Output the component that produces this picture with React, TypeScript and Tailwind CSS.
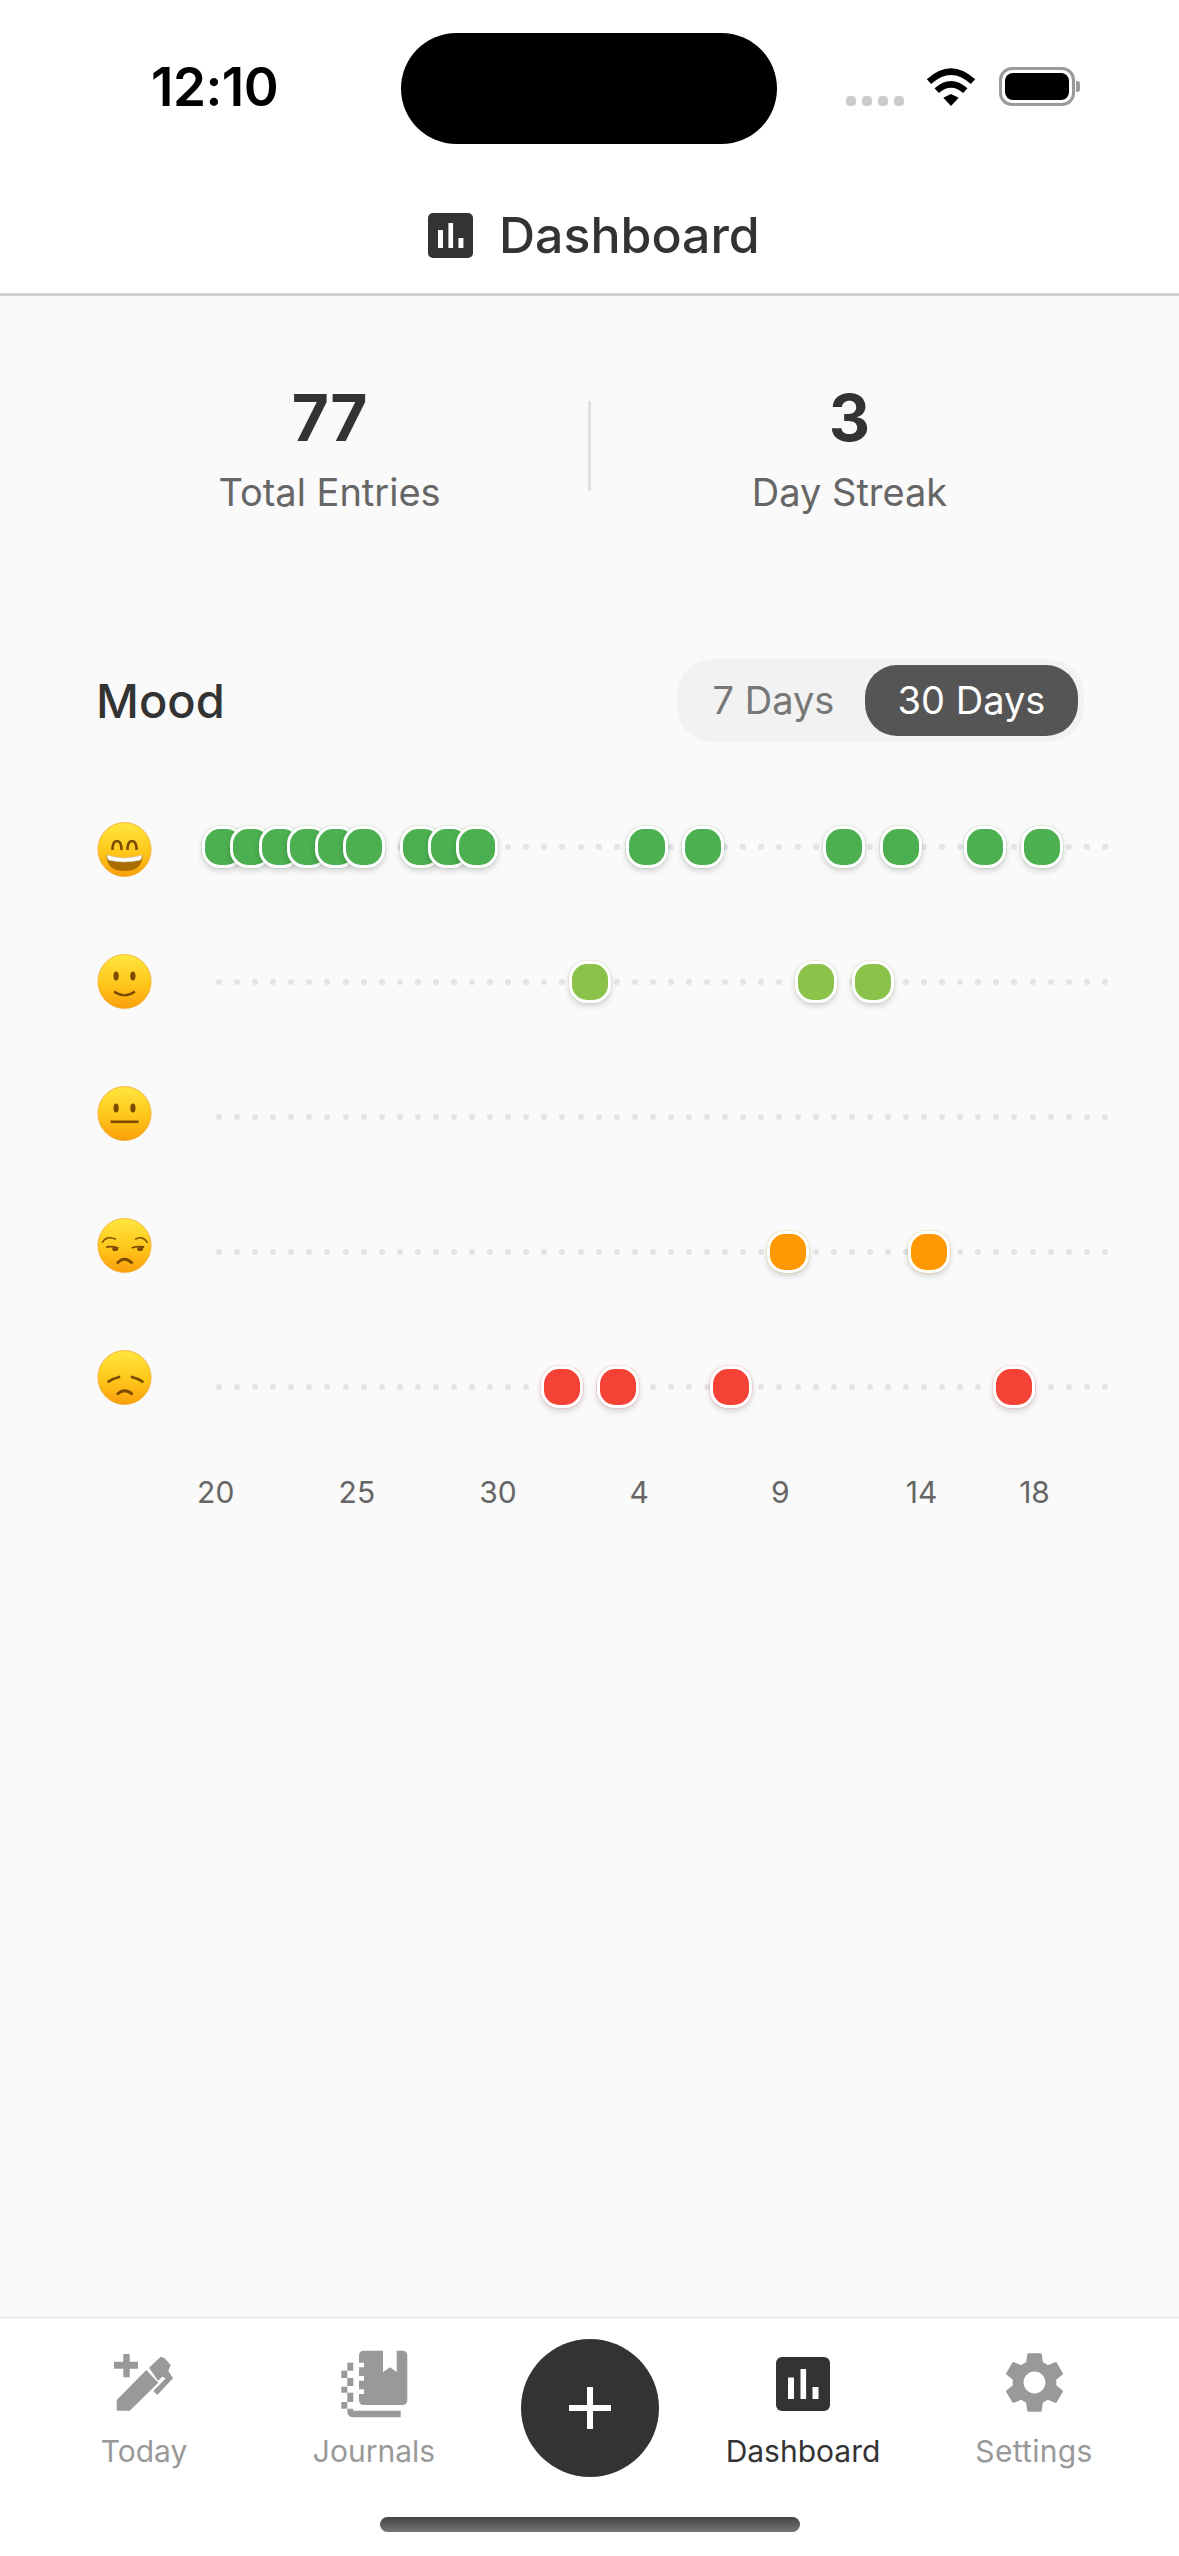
import { MdSettings } from 'react-icons/md';

const DAY_COUNT = 30;

const AXIS_LABELS: Record<number, string> = {
  0: '20',
  5: '25',
  10: '30',
  15: '4',
  20: '9',
  25: '14',
  29: '18',
};

const ROWS = [
  {
    key: 'great',
    days: [0, 1, 2, 3, 4, 5, 7, 8, 9, 15, 17, 22, 24, 27, 29],
    dot: 'bg-[#4caf50] shadow-[0_0_0_1px_#4caf5022,0_3px_6px_rgba(0,0,0,0.16)]',
  },
  {
    key: 'good',
    days: [13, 21, 23],
    dot: 'bg-[#8bc34a] shadow-[0_0_0_1px_#8bc34a22,0_3px_6px_rgba(0,0,0,0.16)]',
  },
  { key: 'neutral', days: [], dot: '' },
  {
    key: 'meh',
    days: [20, 25],
    dot: 'bg-[#ff9800] shadow-[0_0_0_1px_#ff980022,0_3px_6px_rgba(0,0,0,0.16)]',
  },
  {
    key: 'bad',
    days: [12, 14, 18, 28],
    dot: 'bg-[#f44336] shadow-[0_0_0_1px_#f4433622,0_3px_6px_rgba(0,0,0,0.16)]',
  },
];

function ChartIcon({ className }: { className: string }) {
  return (
    <svg viewBox="0 0 54 54" className={className}>
      <rect width="54" height="54" rx="6" fill="#333333" />
      <rect x="12" y="20.5" width="6" height="21.5" fill="#ffffff" />
      <rect x="24.5" y="12" width="5.6" height="30" fill="#ffffff" />
      <rect x="36.5" y="30" width="6" height="12" fill="#ffffff" />
    </svg>
  );
}

function Emoji({ mood }: { mood: string }) {
  const brown = '#7a4a00';
  return (
    <svg viewBox="0 0 54 55" className="w-[55px] h-[55px] shrink-0">
      <defs>
        <linearGradient id={`face-${mood}`} x1="0" y1="0" x2="0" y2="1">
          <stop offset="0" stopColor="#ffe640" />
          <stop offset="0.55" stopColor="#ffc61a" />
          <stop offset="1" stopColor="#fa9f0c" />
        </linearGradient>
      </defs>
      <ellipse cx="27" cy="27.5" rx="26.6" ry="27" fill={`url(#face-${mood})`} stroke="#f0a020" strokeWidth="0.7" />
      {mood === 'great' && (
        <g fill="none" stroke={brown} strokeWidth="2.6">
          <path d="M15 28 Q15 19 19.5 19 Q24 19 24 28" />
          <path d="M30 28 Q30 19 34.5 19 Q39 19 39 28" />
          <path d="M9 33 Q27 39 45 33 Q45 49 27 49 Q9 49 9 33 Z" fill="#a86c00" stroke="none" />
          <path d="M9.5 33 Q27 39 44.5 33 Q44.5 36 43 38 Q27 42 11 38 Q9.5 36 9.5 33 Z" fill="#ffffff" stroke="#c9c9c9" strokeWidth="0.5" />
        </g>
      )}
      {mood === 'good' && (
        <g>
          <ellipse cx="18.6" cy="22" rx="2.6" ry="4.6" fill={brown} />
          <ellipse cx="35.4" cy="22" rx="2.6" ry="4.6" fill={brown} />
          <path d="M16.5 37.5 Q27 45 37.5 37.5" fill="none" stroke={brown} strokeWidth="2.2" />
        </g>
      )}
      {mood === 'neutral' && (
        <g>
          <ellipse cx="18.6" cy="22" rx="2.6" ry="4.6" fill={brown} />
          <ellipse cx="35.4" cy="22" rx="2.6" ry="4.6" fill={brown} />
          <rect x="13" y="34.5" width="28" height="2.6" fill={brown} />
        </g>
      )}
      {mood === 'meh' && (
        <g fill="none" stroke={brown} strokeWidth="1.6">
          <path d="M4.7 24.7 Q9 17 18.3 21.3" />
          <path d="M37.7 21.3 Q45 17 50 24.7" />
          <path d="M8.7 29 Q14 28 21 30" strokeWidth="1.8" />
          <path d="M34 30 Q40 28 46.7 29" strokeWidth="1.8" />
          <ellipse cx="17.7" cy="31" rx="3" ry="2" fill={brown} stroke="none" />
          <ellipse cx="42.7" cy="31" rx="3" ry="2" fill={brown} stroke="none" />
          <path d="M19.5 45.5 Q27 37 35 45.5" strokeWidth="2.8" />
        </g>
      )}
      {mood === 'bad' && (
        <g fill="none" stroke={brown} strokeWidth="2.6">
          <path d="M10 32.3 Q16 28 22.7 26.7" />
          <path d="M33.3 26.7 Q40 28 46 32.3" />
          <path d="M19.5 44.5 Q27 37 35 44.5" strokeWidth="2.8" />
        </g>
      )}
    </svg>
  );
}

function TodayIcon() {
  return (
    <svg viewBox="0 0 70 65" className="w-[70px] h-[65px]" fill="#999999">
      <path d="M5 11.7H14.3V4H20.7V11.7H29V18.7H20.7V27.3H14.3V18.7H5Z" />
      <path d="M7.7 50L37.3 20L49.3 32.7L20.7 60.7H7.7Z" />
      <path d="M40 17.7L51.7 6.7L55.7 8.3L61.7 15L59.3 20.7L64 28.3L48.3 45L44.3 41L56.7 28.3L53.3 26.7L49 30.7Z" />
    </svg>
  );
}

function JournalsIcon() {
  return (
    <svg viewBox="0 0 70 68" className="w-[70px] h-[68px]" fill="#999999">
      <path d="M25 0.7H44V22L51 17.3L57.7 22V0.7H63.3Q68.3 0.7 68.3 5.7V50Q68.3 55 63.3 55H25Q20 55 20 50V44H25V39.3H20V30.7H25V26H20V17.3H25V12.7H20V5.7Q20 0.7 25 0.7Z" />
      <rect x="8.3" y="12.7" width="6" height="8" />
      <rect x="2.3" y="20.7" width="6" height="7.3" />
      <rect x="8.3" y="28" width="6" height="8" />
      <rect x="2.3" y="36.7" width="6" height="6" />
      <rect x="8.3" y="42.7" width="6" height="9.3" />
      <rect x="2.3" y="52" width="6" height="6.7" />
      <path d="M8.3 58.7H14.3V60.7H61.7V67.3H15Q8.3 67.3 8.3 60.7Z" />
    </svg>
  );
}

function Wifi() {
  return (
    <svg viewBox="0 0 50 38" className="w-[50px] h-[38px]">
      <path d="M3 13.7 Q25 -6.3 47 13.7" fill="none" stroke="#000000" strokeWidth="6.5" />
      <path d="M10.7 22.7 Q25 9.9 39.3 22.7" fill="none" stroke="#000000" strokeWidth="6.5" />
      <path d="M17.3 29.7L25 26L32.7 29.7L25 38Z" fill="#000000" />
    </svg>
  );
}

export default function App() {
  return (
    <div className="w-[1179px] h-[2556px] flex flex-col bg-[#fafafa] font-['Inter',sans-serif] antialiased overflow-hidden">
      {/* Header */}
      <div className="bg-white border-b-[3px] border-[#d0d0d0] pt-[33px]">
        <div className="flex items-start">
          <div className="w-[401px] pl-[151px] h-[73px] flex items-end">
            <span className="text-[53px] leading-[50px] font-semibold text-black tracking-[-0.5px] -mb-[6px]">12:10</span>
          </div>
          <div className="w-[376px] h-[111px] rounded-full bg-black" />
          <div className="pl-[69px] h-[73px] flex items-end">
            <div className="flex gap-[6px] mr-[22px]">
              <span className="w-[10px] h-[10px] rounded-[4px] bg-[#cccccc]" />
              <span className="w-[10px] h-[10px] rounded-[4px] bg-[#cccccc]" />
              <span className="w-[10px] h-[10px] rounded-[4px] bg-[#cccccc]" />
              <span className="w-[10px] h-[10px] rounded-[4px] bg-[#cccccc]" />
            </div>
            <div className="mr-[23px]">
              <Wifi />
            </div>
            <div className="flex items-center">
              <div className="w-[76px] h-[39px] rounded-[13px] border-[3px] border-[#9a9a9a] flex items-center justify-center">
                <div className="w-[64px] h-[27px] rounded-[8px] bg-black" />
              </div>
              <div className="w-[4px] h-[11px] rounded-r-[3px] bg-[#9a9a9a] ml-[1px]" />
            </div>
          </div>
        </div>
        <div className="flex items-center pl-[428px] mt-[69px] mb-[35px] h-[45px] gap-[26px]">
          <ChartIcon className="w-[45px] h-[45px]" />
          <span className="text-[50px] leading-[45px] font-medium text-[#333333]">Dashboard</span>
        </div>
      </div>

      {/* Stats */}
      <div className="flex-1">
        <div className="flex items-center pl-[71px] pr-[71px] pt-[90px]">
          <div className="flex-1 flex flex-col items-center">
            <span className="text-[64px] leading-[64px] font-bold text-[#333333]">77</span>
            <span className="text-[38px] leading-[46px] mt-[19px] text-[#666666]">Total Entries</span>
          </div>
          <div className="w-[3px] h-[90px] mb-[9px] bg-[#e0e0e0]" />
          <div className="flex-1 flex flex-col items-center">
            <span className="text-[64px] leading-[64px] font-bold text-[#333333]">3</span>
            <span className="text-[38px] leading-[46px] mt-[19px] text-[#666666]">Day Streak</span>
          </div>
        </div>

        {/* Mood */}
        <div className="flex items-center justify-between pl-[96px] pr-[95px] mt-[144px]">
          <span className="text-[47px] leading-[56px] font-medium text-[#333333]">Mood</span>
          <div className="w-[407px] h-[83px] rounded-[36px] bg-[#f2f2f2] flex items-center justify-end pr-[6px]">
            <span className="flex-1 pl-[5px] text-center text-[38px] text-[#777777]">7 Days</span>
            <span className="w-[213px] h-[71px] rounded-[32px] bg-[#555555] flex items-center justify-center text-[38px] text-white">30 Days</span>
          </div>
        </div>

        <div className="flex items-start pl-[97px] mt-[80px]">
          <div className="flex flex-col gap-[77px]">
            {ROWS.map((row) => (
              <Emoji key={row.key} mood={row.key} />
            ))}
          </div>
          <div className="flex flex-col gap-[93px] ml-[57px] mt-[4px]">
            {ROWS.map((row) => (
              <div key={row.key} className="relative h-[42px] grid grid-cols-[repeat(30,28.24px)]">
                <div className="absolute left-[7px] top-[18px] w-[892px] flex justify-between">
                  {Array.from({ length: 50 }).map((_, i) => (
                    <span key={i} className="w-[6px] h-[6px] rounded-full bg-[#e4e4e4]" />
                  ))}
                </div>
                {Array.from({ length: DAY_COUNT }).map((_, day) => (
                  <div key={day} className="flex justify-center">
                    {row.days.includes(day) && (
                      <span className={`relative shrink-0 w-[42px] h-[42px] rounded-[18px] border-[3px] border-white ${row.dot}`} />
                    )}
                  </div>
                ))}
              </div>
            ))}
          </div>
        </div>

        {/* Axis */}
        <div className="grid grid-cols-[repeat(30,28.24px)] ml-[201.6px] mt-[66px]">
          {Array.from({ length: DAY_COUNT }).map((_, day) => (
            <div key={day} className="flex justify-center">
              <span className="text-[30px] leading-[36px] text-[#666666] whitespace-nowrap">{AXIS_LABELS[day]}</span>
            </div>
          ))}
        </div>
      </div>

      {/* Tab bar */}
      <div className="bg-white border-t-[3px] border-[#eeeeee]">
        <div className="flex h-[198px]">
          <div className="w-[230px] ml-[29px] flex flex-col items-center pt-[31px]">
            <div className="h-[65px]">
              <TodayIcon />
            </div>
            <span className="text-[30px] leading-[36px] mt-[18px] text-[#999999]">Today</span>
          </div>
          <div className="w-[230px] flex flex-col items-center pt-[31px]">
            <div className="h-[65px]">
              <JournalsIcon />
            </div>
            <span className="text-[30px] leading-[36px] mt-[18px] text-[#999999]">Journals</span>
          </div>
          <div className="w-[202px] flex justify-center pt-[20px]">
            <div className="w-[138px] h-[138px] rounded-full bg-[#333333] flex items-center justify-center">
              <svg viewBox="0 0 42 42" className="w-[42px] h-[42px]">
                <path d="M18 0H24V18H42V24H24V42H18V24H0V18H18Z" fill="#ffffff" />
              </svg>
            </div>
          </div>
          <div className="w-[224px] flex flex-col items-center pt-[38px]">
            <div className="h-[58px]">
              <ChartIcon className="w-[54px] h-[54px]" />
            </div>
            <span className="text-[30px] leading-[36px] mt-[18px] text-[#333333]">Dashboard</span>
          </div>
          <div className="w-[238px] flex flex-col items-center pt-[27px]">
            <div className="h-[69px]">
              <MdSettings className="w-[73px] h-[73px] text-[#999999]" />
            </div>
            <span className="text-[30px] leading-[36px] mt-[18px] tracking-[0.3px] text-[#999999]">Settings</span>
          </div>
        </div>
        <div className="flex justify-center pb-[24px]">
          <div className="w-[420px] h-[15px] rounded-full bg-gradient-to-b from-[#444444] to-[#777777]" />
        </div>
      </div>
    </div>
  );
}
